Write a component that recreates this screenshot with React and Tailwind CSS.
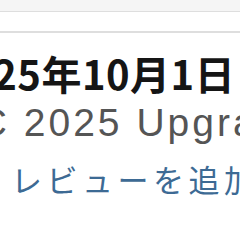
export default function App() {
  return (
    <div className="w-[240px] h-[240px] overflow-hidden bg-white font-['Liberation_Sans','Noto_Sans_CJK_JP',sans-serif]">
      <div className="h-[12px] bg-[#f5f5f5] border-b border-[#dedede]" />
      <div className="h-[21px] bg-white border-b-2 border-[#dedede]" />
      <div className="whitespace-nowrap">
        <div className="mt-[20px] -ml-[55px] h-[40px] leading-[40px] text-[40px] font-bold tracking-[0.5px] text-[#151515] font-['Noto_Sans_CJK_JP',sans-serif]">
          2025年10月1日
        </div>
        <div className="mt-[10px] -ml-[132px] h-[40px] leading-[40px] text-[39px] text-[#555] tracking-[3px]">
          WWDC 2025 Upgrade
        </div>
        <div className="mt-[18px] ml-[11px] h-[36px] leading-[36px] text-[31px] text-[#3d6a94] tracking-[4.5px] font-['Noto_Sans_CJK_JP',sans-serif]">
          レビューを追加
        </div>
      </div>
    </div>
  );
}
